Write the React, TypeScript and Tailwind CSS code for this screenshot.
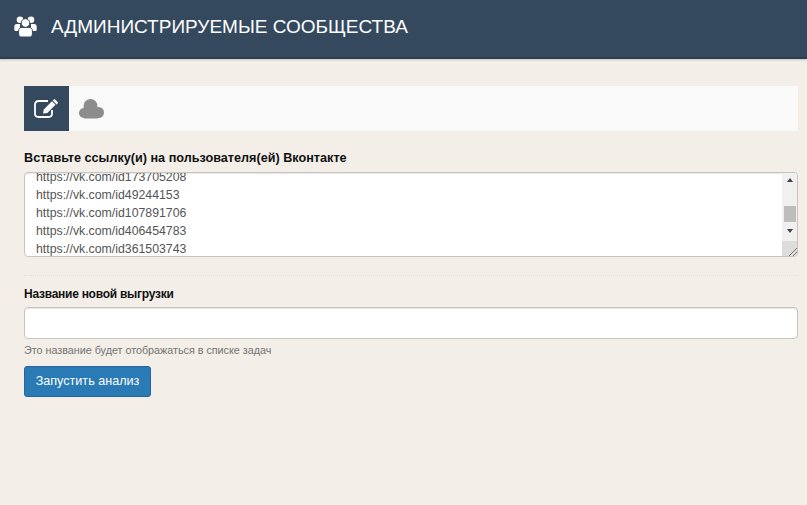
const links = ["https://vk.com/id173705208", "https://vk.com/id49244153", "https://vk.com/id107891706", "https://vk.com/id406454783", "https://vk.com/id361503743"];

function UsersIcon() {
  return (
    <svg width="23" height="21" viewBox="0 0 23 21" fill="#fff">
      <circle cx="6" cy="3.8" r="3.3" />
      <circle cx="17" cy="3.8" r="3.3" />
      <path d="M.3 13.5V10.5C.3 8.8 1.6 8 3 8h3v7H1.8C.9 15 .3 14.5.3 13.5zM22.7 13.5V10.5c0-1.7-1.3-2.5-2.7-2.5h-3v7h4.200c.9 0 1.500-.5 1.500-1.500z" />
      <path d="M4.600 18V15c0-2.200 1.400-3.600 3.400-3.600h7c2 0 3.400 1.400 3.400 3.600v3c0 1.800-1.200 3-3 3H7.600c-1.800 0-3-1.200-3-3z" stroke="#34495e" strokeWidth="1" />
      <circle cx="11.500" cy="7" r="4.300" stroke="#34495e" strokeWidth="1" />
    </svg>
  );
}

function EditIcon() {
  return (
    <svg width="25" height="21" viewBox="0 0 25 21" fill="none">
      <path d="M14 3H4.500C2.500 3 1 4.500 1 6.500v9C1 17.500 2.500 19 4.500 19h10c2 0 3.500-1.500 3.500-3.500V12" stroke="#fff" strokeWidth="1.800" />
      <path d="M9 15.500 9.800 11.500 18 3.300 21.500 6.800 13.300 15z" fill="#fff" />
      <path d="M19.500 1.800c.6-.6 1.300-.6 1.900 0l2 2c.6.6.6 1.300 0 1.900l-.8.8-3.900-3.900z" fill="#fff" />
    </svg>
  );
}

function CloudIcon() {
  return (
    <svg width="25" height="20" viewBox="0 0 25 20" fill="#8c8c8c">
      <circle cx="11.500" cy="7" r="7" />
      <circle cx="5" cy="14" r="5" />
      <circle cx="19.500" cy="13.500" r="5.500" />
      <rect x="5" y="10" width="15" height="9" />
      <rect x="5" y="15" width="14" height="4.500" />
    </svg>
  );
}

export default function App() {
  return (
    <div className="h-[505px] w-[807px] overflow-hidden bg-[#f3eee8] font-['Liberation_Sans',Arial,sans-serif]">
      {/* Шапка */}
      <header className="flex h-[59px] items-center border-b-2 border-[#2c3e50] bg-[#34495e] pb-[5px] pl-[14px] shadow-[0_1px_2px_rgba(0,0,0,0.2)]">
        <UsersIcon />
        <h1 className="ml-[14px] text-[19px] leading-none text-white">АДМИНИСТРИРУЕМЫЕ СООБЩЕСТВА</h1>
      </header>

      <main className="pl-6 pr-[9px] pt-[27px]">
        {/* Вкладки */}
        <div className="flex h-[45px] items-stretch bg-[#f9f9f9]">
          <div className="flex w-[45px] items-center justify-center bg-[#34495e]">
            <EditIcon />
          </div>
          <div className="flex items-center pl-[10px]">
            <CloudIcon />
          </div>
        </div>

        <label className="mt-[20px] block text-[12.65px] font-bold leading-[15px] text-[#111]">
          Вставьте ссылку(и) на пользователя(ей) Вконтакте
        </label>

        {/* Поле со ссылками */}
        <div className="mt-[6px] flex h-[85px] overflow-hidden rounded-[4px] border border-[#c8c4be] bg-white shadow-[inset_0_1px_1px_rgba(0,0,0,0.1)]">
          <div className="flex-1 overflow-hidden pl-[11px] text-[12.3px] leading-[18px] text-[#555]">
            <div className="-mt-[5px]">
              {links.map((link) => (
                <div key={link}>{link}</div>
              ))}
            </div>
          </div>
          <div className="flex w-[15px] flex-col items-center bg-[#f0f0f0]">
            <div className="mt-[5px] h-0 w-0 border-x-[3.5px] border-b-[4px] border-x-transparent border-b-[#444]" />
            <div className="mt-[24px] h-[16px] w-[12px] bg-[#bdbdbd]" />
            <div className="mt-[7px] h-0 w-0 border-x-[3.5px] border-t-[4px] border-x-transparent border-t-[#444]" />
            <div className="mt-auto flex h-[15px] w-full items-end justify-end bg-[#dcdcdc]">
              <svg width="9" height="9" viewBox="0 0 9 9">
                <path d="M1 9 9 1M5 9l4-4" stroke="#777" strokeWidth="1" fill="none" />
              </svg>
            </div>
          </div>
        </div>

        <div className="mt-[18px] border-t border-dotted border-[#e4dfd8]" />

        <label className="mt-[11px] block text-[12px] font-bold leading-[15px] tracking-[-0.26px] text-[#111]">
          Название новой выгрузки
        </label>
        <div className="mt-[5px] h-[32px] rounded-[4px] border border-[#c8c4be] bg-white shadow-[inset_0_1px_1px_rgba(0,0,0,0.1)]" />
        <p className="mt-[4px] text-[10.75px] leading-[14px] text-[#737373]">Это название будет отображаться в списке задач</p>

        <button className="mt-[9px] block h-[31px] w-[127px] rounded-[3px] border border-[#2a6496] bg-[#2a7ab5] text-[12.6px] text-white">
          Запустить анализ
        </button>
      </main>
    </div>
  );
}
